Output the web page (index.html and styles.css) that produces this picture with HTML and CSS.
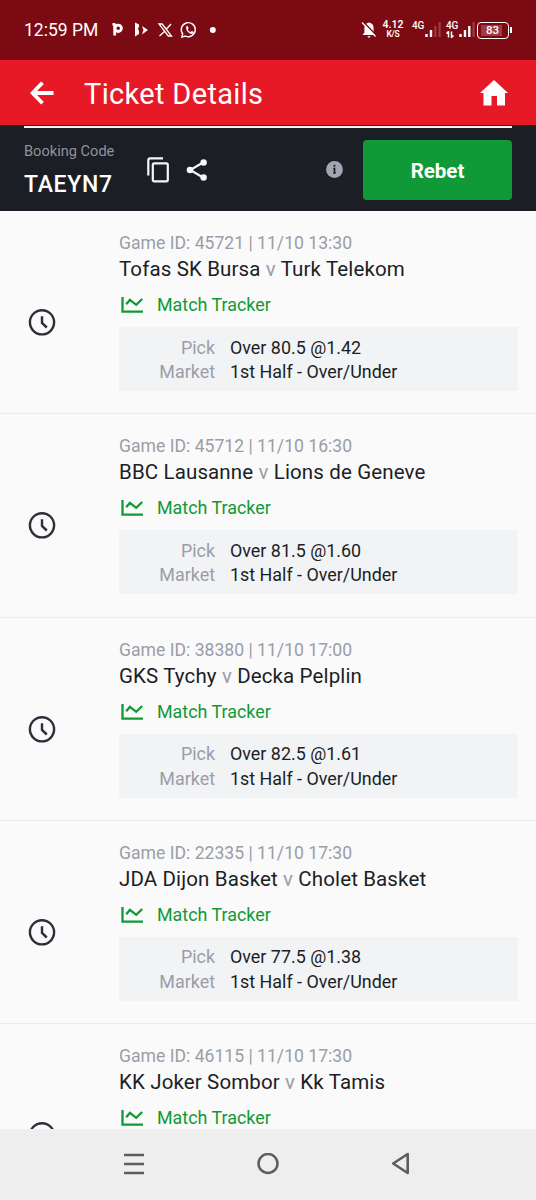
FILE: index.html
```html
<!DOCTYPE html>
<html lang="en">
<head>
<meta charset="utf-8">
<title>Ticket Details</title>
<link rel="stylesheet" href="styles.css">
</head>
<body>
<svg class="defs" aria-hidden="true">
  <symbol id="clock" viewBox="0 0 28 28"><circle cx="14" cy="14.300" r="12.100"/><path d="M14 8.200v6.800l4.800 4.500"/></symbol>
  <symbol id="chart" viewBox="0 0 24 18"><path d="M2.500 1v14.600H23M6.200 8.200l3.700-4.300 6.300 4.900 6-5.800"/></symbol>
</svg>
<div class="screen">
  <div class="status">
    <span class="time">12:59 PM</span>
    <svg class="notifs" width="110" height="20" viewBox="108 20 110 20">
      <path d="M112.500 24.300h2.300M114.700 23.500v12" stroke="#fff" stroke-width="2.800" fill="none"/>
      <circle cx="118.200" cy="28.300" r="3.200" stroke="#fff" stroke-width="2.800" fill="none"/>
      <path d="M135 22.500l4 2v2l-1 2 1 3v2.500l-4 2.500zM142 26l6 4-6 4.500 1.500-4.500z" fill="#fff"/>
      <path d="M159 24h3.200l9.300 12h-3.200zM171 24l-5.200 5.700M164.700 31.200l-5.200 4.800" stroke="#fff" stroke-width="1.300" fill="none"/>
      <path d="M182.700 33.900a7 7 0 1 1 2.800 2.200l-3.700 1z" stroke="#fff" stroke-width="1.400" fill="none"/>
      <path d="M186.300 26.300l1.300-.3 1.100 2.200-.9 1.200q1.100 2 2.900 2.700l1.100-1.100 2.200 1.100q-.4 2-2.300 2c-3.500-.7-6.200-3.800-5.400-7.800z" fill="#fff"/>
      <circle cx="212.800" cy="30" r="3" fill="#fff"/>
    </svg>
    <svg class="mute" width="16" height="18" viewBox="0 0 16 18">
      <path d="M8 1.500c-3 .5-4.600 2.500-4.600 5.500v4.500L1.500 14h13l-1.900-2.500V7c0-3-1.600-5-4.600-5.500zM6.200 15.200h3.600L8 17z" fill="#fff"/>
      <path d="M2.500 1l12.500 13" stroke="#7b0a12" stroke-width="1.400"/><path d="M1 1.500l13.500 14" stroke="#fff" stroke-width="1.200"/>
    </svg>
    <span class="speed"><b>4.12</b><small>K/S</small></span>
    <span class="network">
      <span class="lte">4G</span>
      <svg class="bars" width="17" height="16" viewBox="0 0 17 16"><path d="M2.500 12v3M7 8v7" stroke="#fff" stroke-width="2.400"/><path d="M11.300 4v11M15.600 0v15" stroke="#a03a42" stroke-width="2.200"/></svg>
    </span>
    <span class="network second">
      <span class="lte">4G<svg width="8" height="7" viewBox="0 0 8 7"><path d="M.5 2.500L2.500.5V6.500M5.500.5v6l2-2" stroke="#fff" stroke-width="1.500" fill="none"/></svg></span>
      <svg class="bars" width="17" height="16" viewBox="0 0 17 16"><path d="M2.500 12v3M7 8v7M11.300 4v11" stroke="#fff" stroke-width="2.400"/><path d="M15.600 0v15" stroke="#a03a42" stroke-width="2.200"/></svg>
    </span>
    <span class="battery"><span class="charge">83</span></span>
    <span class="cap"></span>
  </div>
  <header class="appbar">
    <svg width="24" height="24" viewBox="0 0 24 24"><path d="M12.500 1.800L2.600 12l9.900 10.200M3 12h20.500" stroke="#fff" stroke-width="3.800" fill="none"/></svg>
    <h1>Ticket Details</h1>
    <svg class="home" width="28" height="26" viewBox="0 0 28 26"><path d="M14 0l14 13h-3v12.500h-8V16h-5.500v9.500h-8V13H0z" fill="#fff"/></svg>
  </header>
  <section class="booking">
    <div class="code"><span>Booking Code</span><strong>TAEYN7</strong></div>
    <svg class="copy" width="22" height="26" viewBox="0 0 22 26"><g stroke="#f4f6fa" stroke-width="2.200" fill="none"><path d="M1.300 18.500V3a1.700 1.700 0 0 1 1.700-1.700h13"/><rect x="5.800" y="6.300" width="15" height="18" rx="1.500"/></g></svg>
    <svg class="share" width="22" height="24" viewBox="0 0 22 24"><path d="M17.500 4.200L4.200 12l13.300 7.800" stroke="#f4f6fa" stroke-width="2.200" fill="none"/><g fill="#f4f6fa"><circle cx="17.600" cy="4.500" r="3.200"/><circle cx="4" cy="12" r="3.300"/><circle cx="17.600" cy="19.500" r="3.200"/></g></svg>
    <svg class="info" width="17" height="17" viewBox="0 0 17 17"><circle cx="8.500" cy="8.500" r="8.400" fill="#a3a6b2"/><path d="M8.500 3.700v2M7.200 7.500h1.300v5M7.200 12h2.600" stroke="#1b1e25" stroke-width="1.700" fill="none"/></svg>
    <button class="rebet">Rebet</button>
  </section>
  <main class="games">
    <article class="game">
      <svg class="clock"><use href="#clock"/></svg>
      <div class="details">
        <p class="id">Game ID: 45721 | 11/10 13:30</p>
        <h2>Tofas SK Bursa <i>v</i> Turk Telekom</h2>
        <p class="tracker"><svg><use href="#chart"/></svg>Match Tracker</p>
        <dl><dt>Pick</dt><dd>Over 80.5 @1.42</dd><dt>Market</dt><dd>1st Half - Over/Under</dd></dl>
      </div>
    </article>
    <article class="game">
      <svg class="clock"><use href="#clock"/></svg>
      <div class="details">
        <p class="id">Game ID: 45712 | 11/10 16:30</p>
        <h2>BBC Lausanne <i>v</i> Lions de Geneve</h2>
        <p class="tracker"><svg><use href="#chart"/></svg>Match Tracker</p>
        <dl><dt>Pick</dt><dd>Over 81.5 @1.60</dd><dt>Market</dt><dd>1st Half - Over/Under</dd></dl>
      </div>
    </article>
    <article class="game">
      <svg class="clock"><use href="#clock"/></svg>
      <div class="details">
        <p class="id">Game ID: 38380 | 11/10 17:00</p>
        <h2>GKS Tychy <i>v</i> Decka Pelplin</h2>
        <p class="tracker"><svg><use href="#chart"/></svg>Match Tracker</p>
        <dl><dt>Pick</dt><dd>Over 82.5 @1.61</dd><dt>Market</dt><dd>1st Half - Over/Under</dd></dl>
      </div>
    </article>
    <article class="game">
      <svg class="clock"><use href="#clock"/></svg>
      <div class="details">
        <p class="id">Game ID: 22335 | 11/10 17:30</p>
        <h2>JDA Dijon Basket <i>v</i> Cholet Basket</h2>
        <p class="tracker"><svg><use href="#chart"/></svg>Match Tracker</p>
        <dl><dt>Pick</dt><dd>Over 77.5 @1.38</dd><dt>Market</dt><dd>1st Half - Over/Under</dd></dl>
      </div>
    </article>
    <article class="game">
      <svg class="clock"><use href="#clock"/></svg>
      <div class="details">
        <p class="id">Game ID: 46115 | 11/10 17:30</p>
        <h2>KK Joker Sombor <i>v</i> Kk Tamis</h2>
        <p class="tracker"><svg><use href="#chart"/></svg>Match Tracker</p>
      </div>
    </article>
  </main>
  <nav class="navbar">
    <svg width="20" height="22" viewBox="0 0 20 22"><path d="M0 2h20M0 11h20M0 20h20" stroke="#5d5d5d" stroke-width="2.500"/></svg>
    <svg width="22" height="22" viewBox="0 0 22 22"><circle cx="11" cy="10.500" r="9.500" stroke="#5d5d5d" stroke-width="2.500" fill="none"/></svg>
    <svg width="20" height="24" viewBox="0 0 20 24"><path d="M16.700 2v19L2.200 11.500z" stroke="#5d5d5d" stroke-width="2.600" stroke-linejoin="round" fill="none"/></svg>
  </nav>
</div>
</body>
</html>
```
FILE: styles.css
```css
* { box-sizing: border-box; }
body { margin: 0; font-family: Roboto, "Liberation Sans", sans-serif; }
svg { display: block; flex: none; }
h1, h2, p, dl, dd { margin: 0; }
.defs { display: none; }
.screen { display: flex; flex-direction: column; width: 536px; height: 1200px; overflow: hidden; background: #fafafa; }
.status { display: flex; flex: none; align-items: center; height: 60px; padding-left: 24px; background: #7b0a12; color: #fff; white-space: nowrap; }
.time { width: 84px; font-size: 17.500px; line-height: 20px; }
.mute { margin-left: 143px; }
.speed { display: flex; flex-direction: column; width: 22px; margin: -3px 0 0 5px; align-items: center; font-size: 10.500px; line-height: 11px; }
.speed b { font-weight: 600; }
.speed small { font-size: 8.500px; line-height: 8px; font-weight: 600; letter-spacing: -.3px; }
.network { display: flex; width: 28px; height: 16px; margin-left: 8px; }
.network.second { margin-left: 6px; }
.lte { width: 12px; margin-top: -1px; font-size: 10px; font-weight: 500; line-height: 9px; letter-spacing: -.3px; }
.lte svg { margin-top: 1px; }
.battery { width: 32px; height: 17px; margin-left: 3px; padding: 2px 3px; border: 1.500px solid #fff; border-radius: 4px; }
.charge { display: block; width: 21px; height: 11px; padding-left: 5px; background: #a03a42; font-size: 11.500px; line-height: 11px; font-weight: 500; }
.cap { width: 2px; height: 6px; margin-left: 1px; background: #fff; }
.appbar { display: flex; flex: none; align-items: center; height: 65px; padding: 1px 28px 0 30px; background: #e71927; color: #fff; }
.appbar h1 { margin-left: 30px; padding-top: 1px; font-size: 29px; line-height: 34px; font-weight: 400; letter-spacing: .33px; }
.home { margin-left: auto; }
.booking { position: relative; display: flex; flex: none; height: 86px; padding: 15px 24px 0; background: #1b1e25; }
.booking::before { content: ""; position: absolute; top: 1px; left: 24px; right: 24px; height: 2px; background: #f4f4f5; }
.code { display: flex; flex-direction: column; width: 123px; color: #90929c; font-size: 14.600px; line-height: 23px; }
.code strong { margin-top: 8px; color: #fff; font-size: 23px; line-height: 28px; font-weight: 500; letter-spacing: .7px; }
.copy { margin-top: 17px; }
.share { margin: 18px 0 0 17px; }
.info { margin: 21px 0 0 auto; }
.rebet { width: 149px; height: 60px; margin-left: 20px; padding: 2px 0 0; border: 0; border-radius: 4px; background: #109937; color: #fff; font: 700 20.500px Roboto, sans-serif; }
.games { flex: 1; min-height: 0; overflow: hidden; }
.game { display: flex; height: 203.250px; padding: 21px 18px 0 27px; border-bottom: 1.500px solid #eaebee; }
.clock { width: 28px; height: 28px; margin: 76px 63px 0 1px; fill: none; stroke: #2c2f39; stroke-width: 2.400; }
.details { width: 399px; white-space: nowrap; }
.id { color: #9b9da7; font-size: 17.600px; line-height: 22px; }
.details h2 { margin-top: 1px; color: #1b1e25; font-size: 20.500px; line-height: 28px; font-weight: 400; letter-spacing: .13px; }
.details i { color: #9b9da7; font-style: normal; }
.tracker { display: flex; align-items: center; gap: 13px; margin-top: 11px; padding-left: 1px; color: #109937; font-size: 17.900px; line-height: 22px; }
.tracker svg { width: 24px; height: 18px; fill: none; stroke: #109937; stroke-width: 2.300; }
.details dl { display: grid; grid-template-columns: 96px 1fr; align-content: start; column-gap: 15px; height: 64px; margin-top: 11px; padding-top: 8.500px; background: #f1f3f5; font-size: 17.900px; line-height: 24.500px; }
dt { color: #9b9da7; text-align: right; }
dd { color: #1b1e25; }
.navbar { display: flex; flex: none; justify-content: space-between; align-items: center; height: 71.500px; padding: 0 125px 0 124px; background: #eee; }
```
